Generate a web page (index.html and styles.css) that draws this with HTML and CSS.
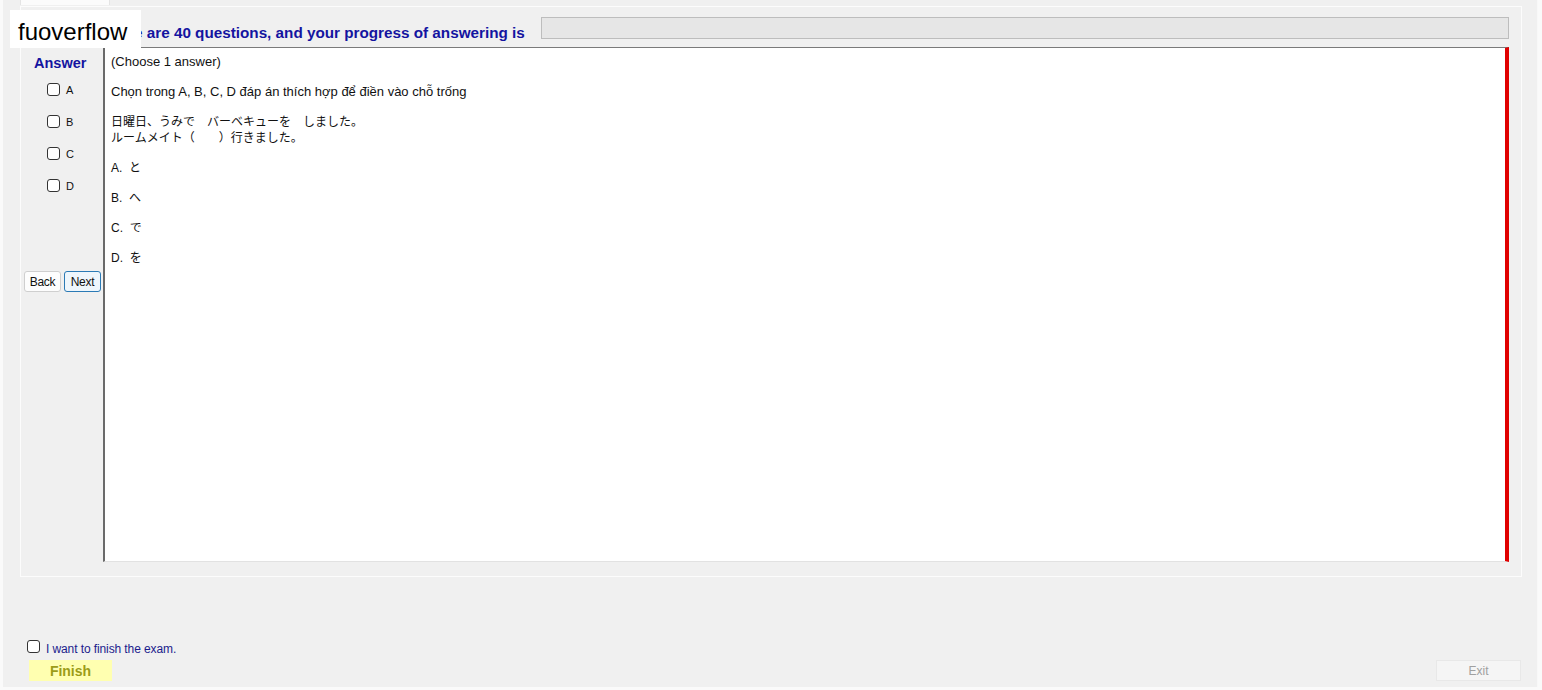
FILE: index.html
```html
<!DOCTYPE html>
<html lang="vi">
<head>
<meta charset="utf-8">
<title>Exam</title>
<link rel="stylesheet" href="styles.css">
</head>
<body>
<div class="window">
  <div class="tab-strip"><div class="tab"></div></div>
  <div class="panel">
    <div class="header">
      <div class="header-text">There are 40 questions, and your progress of answering is</div>
      <div class="progress"></div>
    </div>
    <div class="main">
      <div class="answers">
        <div class="answer-title">Answer</div>
        <label class="opt"><span class="cb"></span><span>A</span></label>
        <label class="opt"><span class="cb"></span><span>B</span></label>
        <label class="opt"><span class="cb"></span><span>C</span></label>
        <label class="opt"><span class="cb"></span><span>D</span></label>
        <div class="nav">
          <button class="btn back">Back</button>
          <button class="btn next">Next</button>
        </div>
      </div>
      <div class="content">
        <div class="para">(Choose 1 answer)</div>
        <div class="para">Chọn trong A, B, C, D đáp án thích hợp để điền vào chỗ trống</div>
        <div class="para jp">日曜日、うみで　バーベキューを　しました。<br>ルームメイト（　　）行きました。</div>
        <div class="para jp">A.&nbsp; と</div>
        <div class="para jp">B.&nbsp; へ</div>
        <div class="para jp">C.&nbsp; で</div>
        <div class="para jp">D.&nbsp; を</div>
      </div>
    </div>
  </div>
  <div class="finish-row"><span class="cb"></span><span class="finish-label">I want to finish the exam.</span></div>
  <div class="buttons-row">
    <button class="finish">Finish</button>
    <button class="exit">Exit</button>
  </div>
  <div class="watermark">fuoverflow</div>
</div>
</body>
</html>
```

FILE: styles.css
```css
html, body {
  margin: 0;
  padding: 0;
}
body {
  width: 1542px;
  height: 690px;
  background: #fafafa;
  font-family: "Liberation Sans", Arial, "Noto Sans CJK JP", sans-serif;
  overflow: hidden;
}
.window {
  position: relative;
  margin-left: 3px;
  width: 1535px;
  height: 687px;
  background: #f0f0f0;
  border-right: 1px solid #f8f8f8;
  box-sizing: border-box;
}
.tab-strip {
  height: 6px;
  padding-left: 17px;
  box-sizing: border-box;
}
.tab {
  width: 90px;
  height: 5px;
  background: #fbfbfb;
  border-left: 1px solid #e4e4e4;
  border-right: 1px solid #e4e4e4;
  box-sizing: border-box;
}
.panel {
  margin-left: 17px;
  width: 1502px;
  height: 571px;
  border: 1px solid #fcfcfc;
  box-sizing: border-box;
  padding: 10px 0 14px 3px;
}
.header {
  display: flex;
  align-items: center;
  height: 22px;
  padding-left: 77px;
  margin-bottom: 8px;
}
.header-text {
  font-weight: bold;
  font-size: 15.25px;
  color: #1414a0;
  white-space: nowrap;
  position: relative;
  top: 4px;
}
.progress {
  margin-left: 16px;
  width: 968px;
  height: 22px;
  background: #e6e6e6;
  border: 1px solid #bdbdbd;
  box-sizing: border-box;
  flex: none;
}
.main {
  display: flex;
  height: 515px;
}
.answers {
  width: 79px;
  flex: none;
  display: flex;
  flex-direction: column;
}
.answer-title {
  font-weight: bold;
  font-size: 14.5px;
  color: #1414a0;
  padding-left: 10px;
  margin-top: 8px;
  height: 16px;
  line-height: 16px;
}
.opt {
  display: flex;
  align-items: center;
  height: 16px;
  margin-top: 16px;
  padding-left: 23px;
  font-size: 11px;
  color: #111;
}
.answer-title + .opt {
  margin-top: 11px;
}
.opt .cb {
  margin-right: 6px;
  margin-top: -2px;
}
.cb {
  display: inline-block;
  width: 13px;
  height: 13px;
  border: 1px solid #333;
  border-radius: 3px;
  background: #fff;
  box-sizing: border-box;
  flex: none;
}
.nav {
  display: flex;
  gap: 3px;
  margin-top: 77px;
}
.btn {
  width: 37px;
  height: 21px;
  padding: 0;
  font-family: "Liberation Sans", Arial, sans-serif;
  font-size: 12px;
  letter-spacing: -0.3px;
  color: #111;
  border-radius: 3px;
  box-sizing: border-box;
}
.back {
  background: #fdfdfd;
  border: 1px solid #cfcfcf;
}
.next {
  background: #eef6fc;
  border: 1px solid #2b7ab5;
}
.content {
  flex: none;
  width: 1406px;
  height: 515px;
  box-sizing: border-box;
  background: #fff;
  border-top: 1px solid #7a7a7a;
  border-left: 2px solid #6a6a6a;
  border-bottom: 1px solid #e2e2e2;
  border-right: 4px solid #e00000;
  padding: 6px 0 0 6px;
}
.para {
  font-size: 13px;
  line-height: 16px;
  margin-bottom: 14px;
  color: #111;
  white-space: nowrap;
}
.jp {
  font-size: 12px;
}
.finish-row {
  display: flex;
  align-items: center;
  height: 16px;
  margin-top: 63px;
  padding-left: 24px;
}
.finish-row .cb {
  margin-right: 6px;
  margin-top: -4px;
}
.finish-label {
  font-size: 12px;
  color: #1c1c8c;
  letter-spacing: -0.1px;
  position: relative;
  top: 1px;
}
.buttons-row {
  display: flex;
  justify-content: space-between;
  margin-top: 4px;
  padding: 0 16px 0 26px;
}
.finish {
  width: 83px;
  height: 21px;
  padding: 0;
  border: none;
  background: #ffffb0;
  font-family: "Liberation Sans", Arial, sans-serif;
  font-weight: bold;
  font-size: 14px;
  color: #9c9c18;
}
.exit {
  width: 85px;
  height: 21px;
  padding: 0;
  border: 1px solid #e8e8e8;
  background: #f5f5f5;
  font-family: "Liberation Sans", Arial, sans-serif;
  font-size: 12px;
  color: #a0a0a0;
}
.watermark {
  position: absolute;
  left: 7px;
  top: 10px;
  width: 131px;
  height: 38px;
  background: #fff;
  font-size: 24px;
  line-height: 38px;
  padding: 3px 0 0 8px;
  box-sizing: border-box;
  color: #000;
}
```
